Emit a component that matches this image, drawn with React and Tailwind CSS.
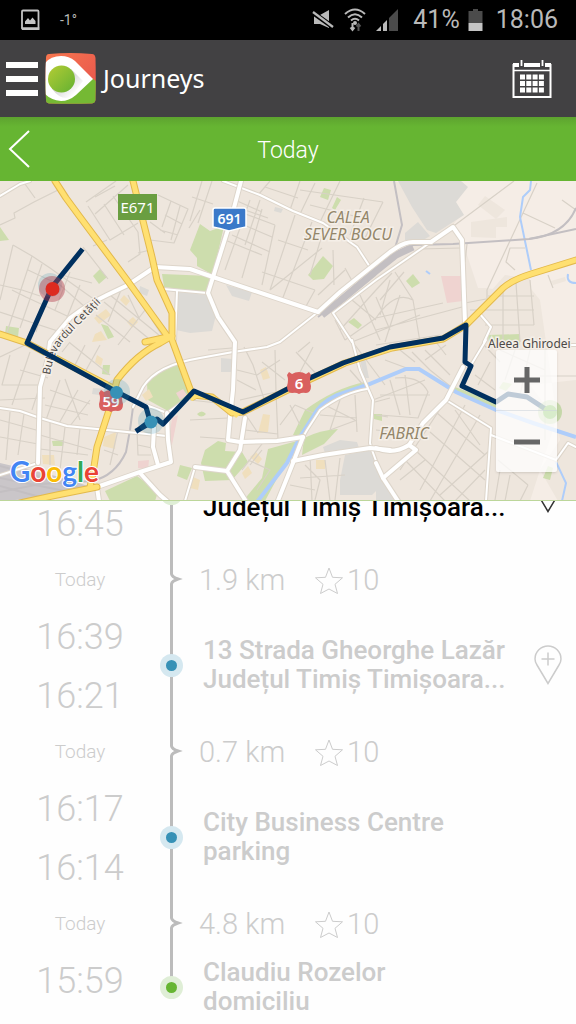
import React from 'react';

const MAP = {
  outskirts: 'M392 181 L576 181 V501 H558 L540 470 L560 440 L540 300 L520 275 L496 288 L466 324 L464 245 L452 226 L462 214 L440 190 Z M576 380 L530 385 L556 420 L530 501 H576 Z',
  urban: [
    'M462 240 L478 288 H466 Z', 'M471 222 L507 217 V227 L496 227 V238 L471 237 Z',
    'M467 288 H486 L500 290 L466 324 Z', 'M490 292 L505 275 L530 279 L534 325 H470 Z',
    'M470 325 H534 V345 H470 Z', 'M534 306 H541 V317 H534 Z', 'M551 281 L565 277 L566 281 L553 285 Z',
    'M485 196 L505 210 L496 219 L478 205 Z',
  ],
  gray: [
    'M398 181 H461 L468 187 L456 202 L464 215 L436 233 L427 230 L412 207 Z',
    'M405 240 V233 L418 222 L430 236 L420 242 Z',
    'M178 292 L207 295 L216 315 L212 331 L190 333 L176 330 Z',
    'M226 285 L252 292 L249 301 L232 296 Z', 'M275 207 L283 209 L281 213 L274 211 Z',
    'M221 358 L232 359 V372 H221 Z', 'M323 447 L340 440 L357 442 L359 448 L325 453 Z',
    'M340 480 L345 455 L370 450 L376 463 L385 482 L372 495 H340 Z',
    'M93 388 L107 389 L106 396 L92 394 Z', 'M140 286 L149 290 L147 296 L139 293 Z',
    'M376 475 L384 478 L396 500 H376 Z',
    'M360 360 L365 358 L369 378 L364 378 Z',
  ],
  green: [
    'M0 227 L9 240 L0 241 Z', 'M93 276 L100 269 L107 277 L99 284 Z',
    'M101 324 L108 326 L114 337 L108 339 Z', 'M6 326 L19 328 L18 337 L5 334 Z',
    'M200 224 L190 250 L197 258 V266 L213 275 L224 226 L210 231 Z', 'M162 274 L210 276 L207 293 L164 287 Z',
    'M324 188 L331 190 L328 200 L320 197 Z', 'M337 197 L341 200 L335 210 L332 208 Z',
    'M323 256 L333 266 L324 279 L313 280 L308 275 Z',
    'M348 322 L354 318 L362 325 L358 329 Z', 'M406 281 L413 274 L420 283 L412 288 Z',
    'M488 335 L520 334 V345 L489 345 Z', 'M103 365 L110 365 L109 375 L102 374 Z',
    'M147 384 Q165 365 180 364 L190 395 L168 411 L148 400 Z', 'M52 441 L64 440 L63 446 L53 446 Z',
    'M105 491 L137 476 L158 492 L155 501 H110 Z', 'M180 465 L192 468 L187 480 L177 476 Z',
    'M205 450 L218 441 L226 443 L225 451 L242 452 L248 462 L232 480 L205 481 L201 463 Z',
    'M268 449 L297 441 L265 501 H243 L262 478 Z',
    'M293 435 L305 410 Q335 388 365 382 L368 385 Q335 395 320 410 L303 437 Z',
    'M304 438 Q320 430 338 429 L324 444 L302 455 Z',
    'M455 387 L496 402 V408 L453 392 Z', 'M374 414 L382 414 V421 L374 419 Z',
    'M548 466 L553 468 L550 480 L543 478 Z', 'M503 382 L512 384 L506 391 L499 388 Z',
    'M197 414 Q202 409 206 414 Q201 419 197 414 Z',
  ],
  sand: [
    'M94 318 L106 309 L111 315 L99 324 Z', 'M120 300 L124 295 L130 301 L126 306 Z',
    'M127 322 L133 317 L138 322 L132 328 Z', 'M95 334 L101 331 L107 340 L92 342 Z',
    'M97 355 L103 359 L101 366 L95 362 Z', 'M104 437 L116 432 L115 449 L103 446 Z',
    'M42 455 L54 455 L55 465 L43 464 Z', 'M260 370 L266 367 L270 378 L263 380 Z',
    'M258 433 L263 414 L270 415 L268 432 Z', 'M250 457 L256 452 L262 459 L258 464 Z',
    'M242 473 L248 466 L252 473 L245 479 Z', 'M316 460 H325 V469 H316 Z', 'M193 477 L200 480 L198 490 L190 488 Z',
    'M142 395 L149 389 L153 397 L146 401 Z',
  ],
  pink: [
    'M441 276 L462 276 L463 301 L447 303 Z', 'M172 418 L178 415 L172 445 H168 Z',
    'M138 461 L149 460 L148 470 L138 468 Z', 'M176 393 L183 389 L187 395 L180 400 Z',
  ],
  yard: 'M0 463 L60 477 L88 486 L45 498 L0 501 Z',
  rails: [
    'M318 317 L340 300 L376 270 L396 253 L413 245 L453 244 L529 239 L576 229',
    'M529 239 Q565 235 576 208', 'M394 181 L402 225 L395 248', 'M143 387 L133 407 L130 430 L126 452 Q115 476 92 481 L40 484 L0 492',
    'M0 466 L88 490', 'M0 478 L70 492', 'M0 486 L40 497',
  ],
  minor: [
    'M25 184 L35 198', 'M0 225 L15 218 L14 213 L34 202 L58 190', 'M86 202 L116 181', 'M95 214 L128 185 M88 206 L110 240 L138 223 M104 204 L124 235 M113 196 L138 232 M95 197 L115 186',
    'M138 232 L140 254 L128 262 M93 246 L107 240 M83 247 L108 279 M138 253 L150 250',
    'M150 240 L174 243 L188 209 L158 195 M165 215 L182 224 M160 230 L178 235 M171 201 L162 227 M180 206 L171 240 M150 222 L165 233 M189 228 L200 210',
    'M13 245 L0 300 M13 245 L32 256 L50 268 L95 300 M32 256 L6 335 M0 285 L22 290 L40 296 M28 270 L60 285 L85 307 M12 290 L26 297 L80 322 M42 264 L20 328 M70 272 L55 310 M80 285 L66 320 M0 312 L70 335 M62 275 L92 283 M38 315 L28 340 M45 300 L36 332',
    'M110 295 L165 340 M96 315 L130 342 M121 290 L108 322 M145 310 L118 345 M152 320 L165 340 M104 302 L148 338 M128 295 L140 320',
    'M25 345 L0 357 M30 352 L12 405 M10 355 L2 385 L38 385 M45 370 L32 410 M60 380 L46 420 M65 379 L80 420 M78 390 L58 425 M20 370 L48 378 M0 400 L45 398 M50 390 L90 404 M45 405 L88 415 M90 400 L70 426',
    'M70 343 L110 375 M85 345 L75 365 M100 345 L85 372 M62 352 L70 342',
    'M0 420 L36 430 M0 437 L38 444 M10 412 L6 460 M24 414 L18 455 M40 435 L92 450 M50 420 L50 465 M65 427 L60 470 M80 428 L77 455 M40 449 L88 455 M118 430 L110 465 M104 450 L118 455 M137 432 L138 455 L151 455 M138 445 L152 448',
    'M190 221 L202 181 M198 223 L212 181 M213 204 L192 197 M222 240 L238 190 M235 200 L262 212 M250 200 L225 270 M262 209 L242 278 M240 212 L275 225 M237 222 L272 237 M232 235 L270 252 M260 200 L245 245 M275 225 L262 285 M295 215 L270 290 M312 222 L282 300 M325 225 L310 275 M225 240 L262 255 M245 210 L268 218 M278 240 L308 250 M262 272 L315 290 M315 290 L305 308 M270 290 L322 248',
    'M270 181 L258 195 M300 181 L290 210 M315 183 L300 214 M340 181 L320 222 M364 198 L350 235 M383 202 L364 240 M265 187 L298 198 M300 190 L383 202 M310 205 L362 218 M345 268 L357 290 L376 275 M318 295 L345 270 M333 250 L334 285',
    'M376 290 L392 273 M352 300 L376 320 M360 295 L380 340 M376 297 L390 330 M395 272 L413 300 L420 342 M376 318 Q395 290 413 300 M335 320 L345 340 M345 340 L376 318 L443 303 M376 330 L462 307 M390 280 L380 315 M400 295 L385 342 M376 345 L440 335 M340 330 L376 290 M352 342 L420 315',
    'M404 272 L380 300 M420 249 L460 248 M467 244 L465 262 M455 225 L514 181 M537 183 L487 290 V300 M503 285 V342 M516 283 L520 342 M530 280 L534 325 M488 296 L534 296 M470 310 L534 310 M486 299 L465 303 M485 325 H534 M515 270 L506 262 L510 248 H525 M523 213 L555 228 M548 275 L553 288 M562 200 L576 210',
    'M190 400 L235 405 M208 350 L232 348 M237 370 L257 375 L280 360 M244 347 L253 365 L265 402 M237 380 L256 390 M240 400 L276 392 L278 440 M262 362 L285 380 M276 392 L275 350 M296 352 L320 378 M298 352 L310 342 M313 347 L296 380 M245 430 L278 434 M280 425 L295 405 L318 415 M290 405 L300 425 M200 437 L228 439 M248 418 L258 433 M190 420 L228 418 M265 440 L242 470 M248 460 L270 470 L257 490 M262 450 L250 465',
    'M340 400 L330 430 M355 395 L357 432 M320 415 L357 418 M325 405 L355 420 M330 430 L357 420 M325 460 L330 501 M340 458 L335 500 M305 465 L320 480 L315 500 M375 402 L390 398 M376 415 L388 417 M376 430 L395 432 M350 370 L372 395 M373 400 L425 380 M300 478 L345 475 M310 455 L312 501 M290 485 L315 490 M355 345 L385 385',
    'M395 378 Q420 375 428 392 L418 418 L380 415 M405 375 L410 415 M380 395 L430 395 M390 380 L400 415 M430 370 L455 390 M425 350 L450 375 M436 342 L446 355 M446 345 L425 360 M412 352 L430 370 M400 350 L415 362 M385 360 L412 370',
    'M446 400 L400 470 M455 410 L480 445 M465 405 L420 490 M480 415 L430 501 M430 432 L485 480 M415 450 L470 501 M405 460 L445 501 M400 480 L425 460 M436 412 L485 455 M490 450 L440 495 M485 470 L455 501 M500 470 L495 500 M510 475 L505 501 M528 485 L520 501 M498 460 L528 485 M500 350 L545 370 M545 350 V440 M515 350 L505 380 M530 350 L520 395 M490 362 L478 385 M484 345 L500 362 M495 390 L475 375 M540 376 L576 376',
  ],
  water: [
    'M576 437 L533 423 L496 410 L456 392 L419 369 L406 369 L367 385 L337 395 Q320 403 314 415 L300 437 L287 463 L257 502',
  ],
  streams: ['M531 181 L530 190 L523 197 L520 217 L531 270', 'M556 462 L566 483 L562 501', 'M568 274 Q566 283 576 283', 'M426 271 L430 274'],
  white: [
    'M38 463 L40 387 L48 358 L50 342 L70 318 Q90 303 107 295 L128 285 L155 267 L190 269 L213 277 L273 297 L318 312',
    'M241 181 L230 223 L208 293 L218 317 L235 342 L233 390 L230 417 L228 440 L240 442 L277 441 L303 437',
    'M318 312 L340 292 L390 252 L396 248 Q405 242 413 242 L431 242',
    'M431 242 L453 227 L462 240 L465 323',
    'M376 448 Q393 455 409 445 L423 423 L446 400 L463 367', 'M409 445 L416 450 L383 478', 'M376 463 L383 478 L398 501',
    'M167 413 L168 440 L171 462 L137 473 L97 487 L99 501',
    'M154 427 L153 447 L158 465', 'M140 473 L160 495 L167 501', 'M247 503 L227 471 L240 450 L245 418', 'M195 467 L227 471',
    'M303 437 L293 463 L277 503', 'M293 461 L323 455 L370 448 L390 450',
  ],
  lanes: [
    'M0 196 L20 184 L30 181', 'M163 289 L207 293', 'M177 291 L175 340', 'M223 181 L260 195 L293 211 L323 223 L357 247 L370 267',
    'M133 407 L143 387 Q157 365 200 358 L233 352 L267 347 L280 342 L318 312',
    'M352 342 L333 313 L376 280 L431 242', 'M352 340 L360 370 L373 400 L370 443 L372 450 L383 480',
    'M463 367 L471 365 L486 340', 'M446 400 L491 428 L486 501', 'M491 435 L556 460 L568 443 L576 447',
    'M479 313 L491 327 L484 342', 'M560 345 H576', 'M0 408 L20 411 L40 418 L67 426 L107 430 L167 436',
    'M117 392 L133 400 L167 413', 'M185 501 L195 467', 'M367 389 Q345 392 320 410 L307 430 L303 437',
    'M0 475 L38 463', 'M167 413 L192 395',
  ],
  yellow: [
    'M55 181 L66 198 L80 217 L127 280 L168 337', 'M133 181 L152 257 L157 280 L172 313 L172 340 L193 397',
    'M0 334 L27 343 L117 390', 'M145 342 L172 336 L160 343 Q137 354 117 380 L110 407 L97 447 L93 473 L90 487', 'M20 503 L57 495 L97 487',
    'M193 395 L212 397 L232 413 L243 412 L300 384 L345 363 L392 348 L443 339 L466 325 L503 288 Q512 280 531 274 L576 260',
  ],
  route: 'M81 251 L52 287 L27 343 L117 392 L146 407 L150 421 L138 430 M138 430 L157 419 L163 424 L194 391 L243 412 L299 383 L343 363 L390 347 L443 338 L466 325 L465 362 L471 366 L462 386 L496 402 L508 394 L527 397 L550 412',
};

const JOURNEYS = [
  { kind: 'stop', times: ['16:45'], place: ['Județul Timiș Timișoara...'], tone: 'green', active: true, pin: true },
  { kind: 'trip', distance: '1.9 km', score: 10 },
  { kind: 'stop', times: ['16:39', '16:21'], place: ['13 Strada Gheorghe Lazăr', 'Județul Timiș Timișoara...'], tone: 'blue', pin: true },
  { kind: 'trip', distance: '0.7 km', score: 10 },
  { kind: 'stop', times: ['16:17', '16:14'], place: ['City Business Centre', 'parking'], tone: 'blue' },
  { kind: 'trip', distance: '4.8 km', score: 10 },
  { kind: 'end', times: ['15:59'], place: ['Claudiu Rozelor', 'domiciliu'], tone: 'green' },
];

function StatusBar() {
  return (
    <div className="h-10 bg-black text-[#b9b9b9] flex items-center justify-between pl-5 pr-[18px]">
      <div className="flex items-center gap-5">
        <svg width="20" height="22" viewBox="0 0 20 22" fill="none">
          <rect x="2" y="1.5" width="16.5" height="18" rx="1" stroke="#c4c4c4" strokeWidth="1.8"/>
          <path d="M1 18.5H19.5V21H2Z M5 15V12.5L8 9L10 11.5L12.5 8.5L15.5 12V15Z" fill="#c4c4c4"/>
        </svg>
        <span className="text-sm">-1°</span>
      </div>
      <div className="flex items-center">
        <svg className="mr-2.5" width="22" height="22" viewBox="0 0 22 22" fill="#b9b9b9">
          <path d="M2 6H8L17 1V19L8 15H2Z"/>
          <path d="M0 3L21 18" stroke="#000" strokeWidth="5"/>
          <path d="M1 3L21 18" stroke="#b9b9b9" strokeWidth="2.2"/>
        </svg>
        <svg className="mr-2.5" width="22" height="24" viewBox="0 0 22 24" fill="none" stroke="#b9b9b9" strokeWidth="2">
          <path d="M1 6Q11 -3 21 6M4 9.5Q11 3 18 9.5M7 12.5Q11 9 15 12.5"/>
          <circle cx="11" cy="15" r="1"/>
          <path d="M8.5 15V22M6.5 19.5L8.5 22L10.5 19.5"/>
          <path d="M14.5 23V16M12.5 18.5L14.5 16L16.5 18.5" stroke="#555"/>
        </svg>
        <svg className="mr-3.5" width="23" height="24" viewBox="0 0 23 24">
          <path d="M13 10L22 1V23H13Z" fill="#4b4b4b"/>
          <path d="M0 23L4 19V23Z M5 18V23H4V19Z" fill="#b9b9b9"/>
          <path d="M11 12L7 16V23H11Z" fill="#b9b9b9"/>
        </svg>
        <span className="text-[25px] mr-2">41%</span>
        <svg className="mr-[13px]" width="15" height="24" viewBox="0 0 15 24">
          <path d="M5 1H10V3H14.5V15H0.5V3H5Z" fill="#4b4b4b"/>
          <path d="M0.5 15H14.5V23H0.5Z" fill="#c4c4c4"/>
        </svg>
        <span className="text-[25px]">18:06</span>
      </div>
    </div>
  );
}

function Logo() {
  return (
    <svg width="51" height="51" viewBox="0 0 51 51">
      <defs>
        <linearGradient id="red" x1="0" y1="0" x2="1" y2="1">
          <stop offset="0" stopColor="#f8774f"/>
          <stop offset="1" stopColor="#e4504c"/>
        </linearGradient>
        <linearGradient id="leaf" x1="0" y1="0" x2="1" y2="1">
          <stop offset="0" stopColor="#b4cc34"/>
          <stop offset="1" stopColor="#63b132"/>
        </linearGradient>
        <linearGradient id="shade" x1="0" y1="0" x2="1" y2="1">
          <stop offset="0.4" stopColor="#d5d5d5"/>
          <stop offset="0.8" stopColor="#fff"/>
        </linearGradient>
        <clipPath id="tile">
          <path d="M4 1Q25 -1 47 1Q50 1 50.5 5Q51 25 50.5 47Q50 50 47 50.5Q25 51 4 50.5Q1 50 1 47Q0 25 1 5Q1 1 4 1Z"/>
        </clipPath>
      </defs>
      <g clipPath="url(#tile)">
        <rect width="51" height="51" fill="url(#red)"/>
        <path d="M0 51V28L48 26L51 28V51Z" fill="#75b934"/>
        <path d="M0 10Q6 3 16 3Q24 3 30 8L48 26L31 42Q24 48 16 48Q6 47 0 41Z" fill="#fff"/>
        <path d="M26 16L38 28L26 44Q16 48 7 36Z" fill="url(#shade)"/>
        <circle cx="16.5" cy="26" r="13.5" fill="url(#leaf)"/>
      </g>
    </svg>
  );
}

function CalendarIcon() {
  const cells = [0, 1, 2, 3];
  return (
    <svg width="40" height="40" viewBox="0 0 40 40" fill="none" stroke="#fff">
      <path d="M1.5 5V38H38.5V5" strokeWidth="2"/>
      <path d="M1 6H7M12 6H28M33 6H39" strokeWidth="4"/>
      <path d="M9.5 1V7M30.5 1V7" strokeWidth="1.8"/>
      <path d="M2 11.5H38" strokeWidth="1.5"/>
      {cells.map(c => (
        <path key={c} d={`M${8 + c * 6.3} 18h5M${8 + c * 6.3} 24.5h5M${8 + c * 6.3} 31h5`} strokeWidth="5"/>
      ))}
    </svg>
  );
}

function Header() {
  return (
    <header className="h-[77px] bg-[#424143] flex items-center pl-1.5 pr-6 text-white">
      <button aria-label="Menu" className="flex flex-col gap-2 w-8">
        <span className="h-1.5 bg-white"/>
        <span className="h-1.5 bg-white"/>
        <span className="h-1.5 bg-white"/>
      </button>
      <div className="ml-[7px]"><Logo/></div>
      <h1 className="ml-[7px] flex-1 font-['Noto_Sans',sans-serif] text-[25px]">Journeys</h1>
      <button aria-label="Calendar"><CalendarIcon/></button>
    </header>
  );
}

function DayBar() {
  return (
    <div className="h-16 grid grid-cols-[1fr_auto_1fr] items-center bg-linear-to-b from-[#5da32f] to-[#66b532] to-15% text-white">
      <button aria-label="Previous day" className="pl-2 justify-self-start">
        <svg width="23" height="40" viewBox="0 0 23 40" fill="none" stroke="#fff" strokeWidth="2">
          <path d="M21 2L2 20L21 38"/>
        </svg>
      </button>
      <h2 className="pt-1 text-[23px] font-light">Today</h2>
    </div>
  );
}

function Road({ paths, casing, fill, width }) {
  return (
    <g fill="none" strokeLinejoin="round" strokeLinecap="round">
      {paths.map(d => <path key={d} d={d} stroke={casing} strokeWidth={width + 2}/>)}
      {paths.map(d => <path key={d} d={d} stroke={fill} strokeWidth={width}/>)}
    </g>
  );
}

function Area({ paths, fill }) {
  return paths.map(d => <path key={d} d={d} fill={fill}/>);
}

function Shield({ x, y, label }) {
  return (
    <g transform={`translate(${x} ${y})`}>
      <path d="M-10 -11L-7 -9Q-4 -11 0 -11Q4 -11 7 -9L10 -11L12 -8Q10 -3 12 3Q12 10 7 10Q3 9 0 11Q-3 9 -7 10Q-12 10 -12 3Q-10 -3 -12 -8Z" fill="#d9605f"/>
      <text y="6" textAnchor="middle" fill="#fff" fontSize="15" fontWeight="600">{label}</text>
    </g>
  );
}

function JourneyMap() {
  return (
    <section className="relative h-80 z-10 border-b border-[#bcd69a] bg-[#eee6dd]">
      <svg className="w-full h-full font-['Noto_Sans',sans-serif]" viewBox="0 181 576 319" preserveAspectRatio="xMidYMid slice">
        <rect y="181" width="576" height="320" fill="#eee6dd"/>
        <path d={MAP.outskirts} fill="#f5ede6"/>
        <Area paths={MAP.urban} fill="#eee6dd"/>
        <Area paths={MAP.gray} fill="#dcdad6"/>
        <Area paths={MAP.green} fill="#cdddad"/>
        <Area paths={MAP.sand} fill="#f0dfbd"/>
        <Area paths={MAP.pink} fill="#efd3d0"/>
        <path d={MAP.yard} fill="#cac6c9"/>
        <g fill="none" stroke="#d8d1c7" strokeWidth="1.2" strokeLinejoin="round">
          {MAP.minor.map(d => <path key={d} d={d}/>)}
        </g>
        <g fill="none" stroke="#aecdfa">
          {MAP.water.map(d => <path key={d} d={d} strokeWidth="4"/>)}
          {MAP.streams.map(d => <path key={d} d={d} strokeWidth="2"/>)}
        </g>
        <g fill="none" stroke="#c3bfc2" strokeWidth="2">
          {MAP.rails.map(d => <path key={d} d={d}/>)}
          <path d="M322 315L340 301L376 271L396 255L413 247" strokeWidth="7"/>
        </g>
        <Road paths={MAP.lanes} casing="#ddd5ca" fill="#fff" width={2}/>
        <Road paths={MAP.white} casing="#ddd5ca" fill="#fff" width={4}/>
        <Road paths={MAP.yellow} casing="#e3b94c" fill="#ffe071" width={5}/>
        <path d="M228 409L243 412L236 418Z M186 394L200 396L192 401Z" fill="#ffe071"/>

        <g fill="#93866a" stroke="#f5efe8" strokeWidth="3" paintOrder="stroke" fontStyle="italic" fontSize="16" textAnchor="middle">
          <text x="348" y="223">CALEA</text>
          <text x="348" y="240">SEVER BOCU</text>
          <text x="404" y="439">FABRIC</text>
        </g>
        <g fill="#4d4a47" stroke="#f5efe8" strokeWidth="3" paintOrder="stroke" fontSize="12">
          <path id="bulevard" d="M50 375Q53 352 67 337Q82 321 124 280" fill="none" stroke="none"/>
          <text fontSize="11"><textPath href="#bulevard">Bulevardul Cetății</textPath></text>
          <text x="488" y="348">Aleea Ghirodei</text>
        </g>

        <rect x="118" y="194" width="39" height="26" fill="#6a9e41"/>
        <text x="137.5" y="213" textAnchor="middle" fill="#fff" fontSize="15">E671</text>
        <path d="M215 208H244Q246 208 246 210V227Q240 228 229 231Q219 228 213 227V210Q213 208 215 208Z" fill="#3b79c9" stroke="#fff" strokeWidth="1.5"/>
        <text x="229.5" y="224" textAnchor="middle" fill="#fff" fontSize="14" fontWeight="600">691</text>
        <Shield x={111} y={401} label="59"/>

        <path d={MAP.route} fill="none" stroke="#00305f" strokeWidth="5" strokeLinejoin="round" strokeLinecap="square"/>
        <Shield x={299} y={383} label="6"/>
        <circle cx="50" cy="285" r="12" fill="#3791b6" opacity="0.2"/>
        <circle cx="52" cy="289" r="13" fill="#b03040" opacity="0.4"/>
        <circle cx="52.5" cy="289" r="7" fill="#dd2a20"/>
        <circle cx="117" cy="392" r="13" fill="#3791b6" opacity="0.2"/>
        <circle cx="116.5" cy="392.5" r="6.5" fill="#3791b6"/>
        <circle cx="151" cy="421" r="13" fill="#3791b6" opacity="0.2"/>
        <circle cx="151" cy="422" r="6.5" fill="#3791b6"/>
        <circle cx="550" cy="412" r="12" fill="#66b532" opacity="0.3"/>
        <circle cx="550" cy="412" r="7" fill="#66b532"/>

        <text x="10" y="482" fontSize="28" fontWeight="700" stroke="#fff" strokeWidth="2" strokeLinejoin="round" paintOrder="stroke" className="font-['Lato',sans-serif]">
          <tspan fill="#4285f4">G</tspan>
          <tspan fill="#ea4335">o</tspan>
          <tspan fill="#fbbc05">o</tspan>
          <tspan fill="#4285f4">g</tspan>
          <tspan fill="#34a853">l</tspan>
          <tspan fill="#ea4335">e</tspan>
        </text>
      </svg>

      <div className="absolute right-[19px] bottom-7 w-[61px] flex flex-col rounded-xs bg-white/75 shadow divide-y divide-gray-300/60">
        <button aria-label="Zoom in" className="h-[61px] flex items-center justify-center">
          <svg width="28" height="28" viewBox="0 0 28 28" stroke="#666" strokeWidth="5"><path d="M1 14H27M14 1V27"/></svg>
        </button>
        <button aria-label="Zoom out" className="h-[61px] flex items-center justify-center">
          <svg width="28" height="28" viewBox="0 0 28 28" stroke="#666" strokeWidth="5"><path d="M1 14H27"/></svg>
        </button>
      </div>
    </section>
  );
}

function Dot({ tone }) {
  const ring = tone === 'green' ? 'bg-[#dfeed6]' : 'bg-[#d5e8f0]';
  const core = tone === 'green' ? 'bg-[#66b532]' : 'bg-[#3791b6]';
  return (
    <span className={`col-start-1 row-start-1 size-[23px] rounded-full flex items-center justify-center ${ring}`}>
      <span className={`size-[11px] rounded-full ${core}`}/>
    </span>
  );
}

function StopRow({ item }) {
  const last = item.kind === 'end';
  return (
    <li className={`grid grid-cols-[160px_23px_1fr_56px] ${last ? 'h-[74px]' : 'h-[118px]'} ${item.active ? '-mt-[67px]' : ''}`}>
      <div className={`flex flex-col ${last ? '' : 'justify-end'}`}>
        {item.times.map(t => (
          <time key={t} className="h-[59px] leading-[62px] text-center text-[36px] font-light">{t}</time>
        ))}
      </div>
      <div className="grid justify-items-center items-center">
        <span className={`col-start-1 row-start-1 w-[3px] bg-[#bcbcbc] ${last ? 'h-1/2 self-start' : 'h-full'}`}/>
        <Dot tone={item.tone}/>
      </div>
      <p className={`pl-5 text-[26px] leading-[29px] font-medium flex flex-col justify-center ${item.active ? 'text-black pt-[29px]' : ''}`}>
        {item.place.map(line => <span key={line} className="whitespace-nowrap">{line}</span>)}
      </p>
      {item.pin && (
        <button aria-label="Add place" className={`flex items-center justify-center ${item.active ? 'text-[#333]' : ''}`}>
          <svg width="28" height="40" viewBox="0 0 28 40" fill="none" stroke="currentColor" strokeWidth="1.5">
            <path d="M14 38.5L3 20Q1 17 1 14A13 13 0 0 1 27 14Q27 17 25 20Z"/>
            <path d="M14 7.5V20.5M7.5 14H20.5"/>
          </svg>
        </button>
      )}
    </li>
  );
}

function TripRow({ item }) {
  return (
    <li className="grid grid-cols-[160px_23px_1fr] h-[54px] items-center">
      <span className="pt-0.5 text-center text-[19px] font-light">Today</span>
      <svg width="23" height="54" viewBox="0 0 23 54" fill="none">
        <path d="M11.5 0V22Q12 25 18 27Q12 29 11.5 32V54" stroke="#bcbcbc" strokeWidth="3"/>
      </svg>
      <div className="pl-4 pt-1 flex items-center text-[29px] font-light">
        <span>{item.distance}</span>
        <svg className="ml-[30px] mr-1" width="28" height="28" viewBox="0 0 28 28" fill="none" stroke="#ccc">
          <path d="M14 1L17.5 10.3L27.5 10.8L20 17.3L22.5 26.5L14 22L5.5 26.5L8 17.3L0.5 10.8L10.5 10.3Z"/>
        </svg>
        <span>{item.score}</span>
      </div>
    </li>
  );
}

export default function App() {
  return (
    <div className="min-h-screen flex flex-col bg-[#fefefe] font-['Roboto',sans-serif]">
      <StatusBar/>
      <Header/>
      <DayBar/>
      <JourneyMap/>
      <ol className="flex-1 flow-root overflow-hidden text-[#ccc]">
        {JOURNEYS.map((item, i) => (
          item.kind === 'trip' ? <TripRow key={i} item={item}/> : <StopRow key={i} item={item}/>
        ))}
      </ol>
    </div>
  );
}
